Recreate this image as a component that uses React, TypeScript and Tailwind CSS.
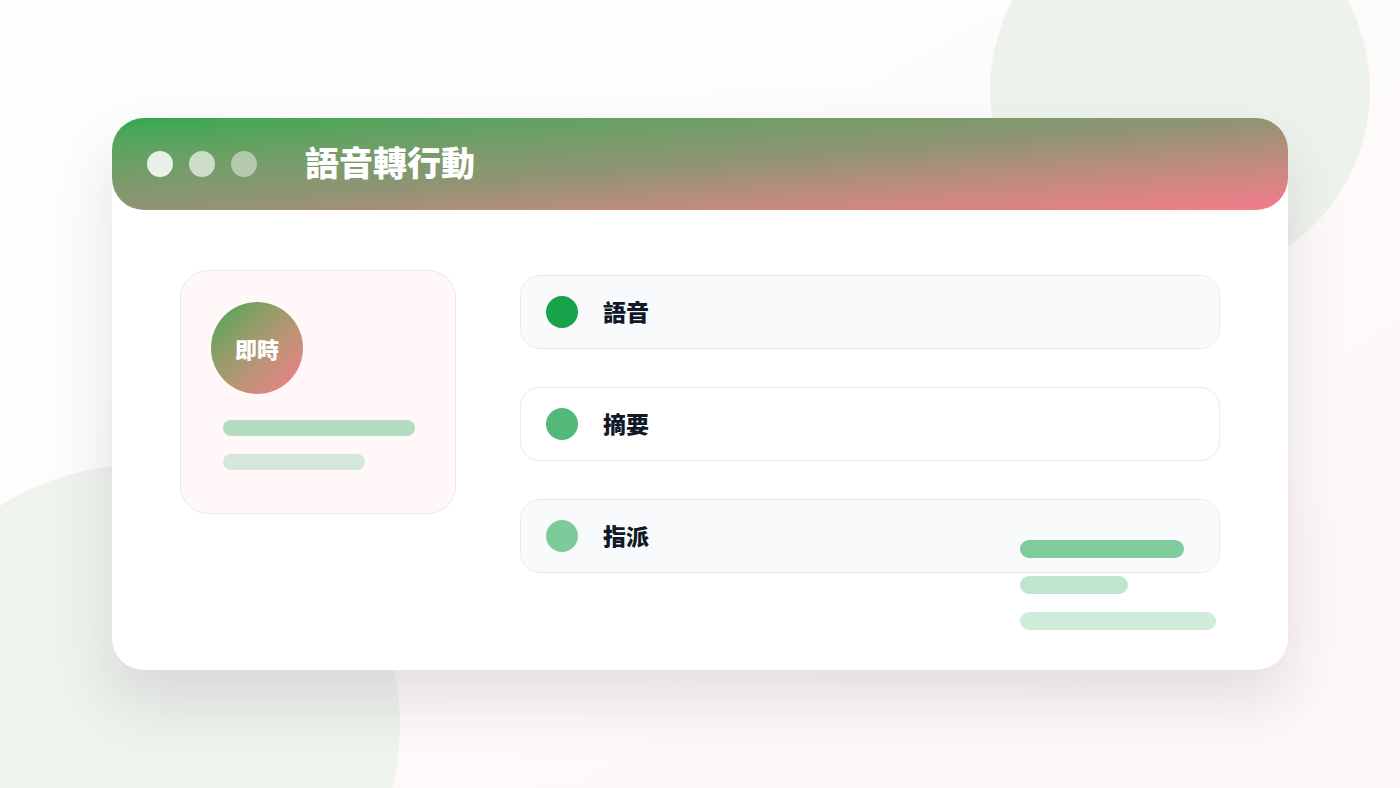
import React from 'react';

const steps = [
  { label: '語音', dot: 'bg-[#16a34a]', bg: 'bg-[#f8fafc]' },
  { label: '摘要', dot: 'bg-[#52b97a]', bg: 'bg-white' },
  { label: '指派', dot: 'bg-[#7dcb9b]', bg: 'bg-[#f8fafc]' },
];

export default function App() {
  return (
    <div
      className="relative w-[1400px] h-[788px] overflow-hidden bg-gradient-to-br from-[#fefefe] to-[#fdf7f7]"
      style={{ fontFamily: '"Noto Sans CJK TC", "Noto Sans", sans-serif' }}
    >
      {/* background blobs */}
      <div className="absolute left-[990px] top-[-100px] w-[380px] h-[380px] rounded-full bg-[#edf3ec]" />
      <div className="absolute left-[-120px] top-[465px] w-[520px] h-[520px] rounded-full bg-[#eef3ed]" />

      <div className="relative flex justify-center pt-[118px]">
        {/* window */}
        <div className="relative w-[1176px] h-[552px] rounded-[32px] bg-white shadow-[0_30px_60px_rgba(60,40,60,0.13)]">
          {/* header */}
          <div className="flex items-center h-[92px] rounded-[32px] bg-gradient-to-br from-[#2ea954] via-[#8f9474] to-[#f47a8a] px-[35px]">
            <div className="flex gap-4">
              <span className="w-[26px] h-[26px] rounded-full bg-white/85" />
              <span className="w-[26px] h-[26px] rounded-full bg-white/65" />
              <span className="w-[26px] h-[26px] rounded-full bg-white/45" />
            </div>
            <h1 className="ml-[48px] -mt-1 text-[34px] font-black text-white leading-none">語音轉行動</h1>
          </div>

          {/* body */}
          <div className="flex gap-[64px] px-[68px] pt-[60px]">
            <div className="w-[276px] h-[244px] rounded-[28px] border border-[#e3ebe4] bg-[#fff7f8] pt-[31px] px-[30px]">
              <div className="w-[92px] h-[92px] rounded-full bg-gradient-to-br from-[#30a855] to-[#f47a8a] flex items-center justify-center">
                <span className="text-[22px] font-black text-white leading-none">即時</span>
              </div>
              <div className="mt-[26px] ml-3 flex flex-col gap-[18px]">
                <div className="w-[192px] h-4 rounded-full bg-[#b4dcc2]" />
                <div className="w-[142px] h-4 rounded-full bg-[#d5e7d9]" />
              </div>
            </div>

            <div className="relative flex-1 flex flex-col gap-[38px] pt-[5px]">
              {steps.map((s) => (
                <div
                  key={s.label}
                  className={`flex items-center h-[74px] rounded-[20px] border border-[#e8ebef] ${s.bg} px-[25px]`}
                >
                  <span className={`w-8 h-8 rounded-full ${s.dot}`} />
                  <span className="ml-[25px] -mt-0.5 text-[23px] font-black text-[#111827] leading-none">{s.label}</span>
                </div>
              ))}

              {/* floating bars */}
              <div className="absolute left-[500px] top-[270px] flex flex-col gap-[18px]">
                <div className="w-[164px] h-[18px] rounded-full bg-[#7ecb9c]" />
                <div className="w-[108px] h-[18px] rounded-full bg-[#bfe5cc]" />
                <div className="w-[196px] h-[18px] rounded-full bg-[#d2ecdb]" />
              </div>
            </div>
          </div>
        </div>
      </div>
    </div>
  );
}
